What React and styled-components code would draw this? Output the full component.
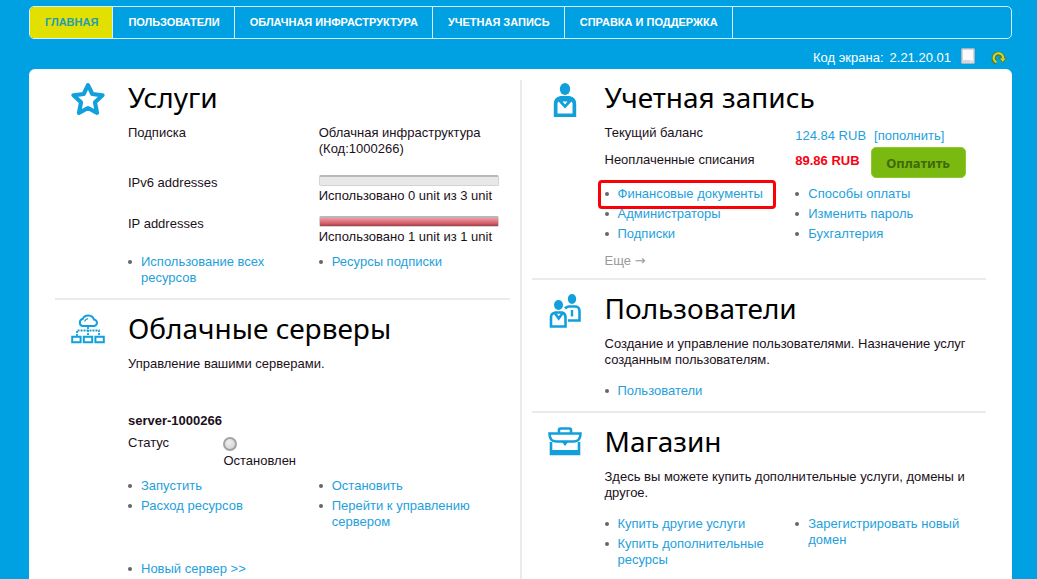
import styled, { createGlobalStyle } from "styled-components";

const StarIcon = () => (
  <svg width="34" height="34" viewBox="0 0 34 34" fill="none" stroke="#12a0dc" strokeWidth="4.2" strokeLinejoin="round">
    <path d="M17 2.2 L21.300 11 L31.500 12.300 L24 19.300 L26 29.800 L17 25 L8 29.800 L10 19.300 L2.500 12.300 L12.700 11 Z" />
  </svg>
);

const CloudIcon = () => (
  <svg width="34" height="34" viewBox="0 0 34 34" fill="none" stroke="#12a0dc" strokeWidth="2">
    <path d="M11.500 12 H22.500 A3.200 3.200 0 0 0 23 5.600 A6 5.600 0 0 0 11.700 5 A3.600 3.600 0 0 0 11.500 12 Z" />
    <path d="M13.500 7.500 Q14.500 5 17 4.700" strokeWidth="1.200" />
    <path d="M17 13 V22" strokeWidth="1.800" strokeDasharray="2 1" />
    <path d="M6 22 V16.500 H28 V22" strokeWidth="1.800" strokeDasharray="2 1" />
    <path d="M1.200 22.700 H9.600 V28.200 H1.200 Z M12.800 22.700 H21.200 V28.200 H12.800 Z M24.400 22.700 H32.800 V28.200 H24.400 Z" />
  </svg>
);

const PersonIcon = () => (
  <svg width="34" height="34" viewBox="0 0 34 34" fill="#12a0dc">
    <ellipse cx="17" cy="6" rx="5.200" ry="6" />
    <path d="M12.500 13 H21.500 Q28.200 14 28.200 21 V34 H5.800 V21 Q5.800 14 12.500 13 Z" />
    <path d="M10.500 18.500 L17 25.500 L23.500 18.500 L24.500 20 V30.500 H9.500 V20 Z" fill="#fff" />
    <path d="M14.500 18.500 H19.500 L17 21.500 Z" fill="#fff" />
  </svg>
);

const UsersIcon = () => (
  <svg width="34" height="34" viewBox="0 0 34 34" fill="none" stroke="#12a0dc" strokeWidth="2.600">
    <ellipse cx="24" cy="5" rx="4.200" ry="5" fill="#12a0dc" stroke="none" />
    <path d="M17 14.500 Q19 12.500 21 12.500 H28 Q31.500 13 31.500 17.500 V26.500 H20" />
    <path d="M24 16 V22.500" strokeWidth="2.400" />
    <ellipse cx="10.500" cy="11" rx="4.500" ry="5" fill="#12a0dc" stroke="none" />
    <path d="M7.500 18.500 H14 Q17.500 19.500 17.500 23 V32.500 H3 V23 Q3 19.500 7.500 18.500 Z" />
    <path d="M6.500 18.500 L10.700 24.500 L15 18.500" />
  </svg>
);

const BriefcaseIcon = () => (
  <svg width="34" height="34" viewBox="0 0 34 34" fill="none" stroke="#12a0dc" strokeWidth="2.600">
    <path d="M11 6 V2.800 Q11 1.500 12.500 1.500 H21.500 Q23 1.500 23 2.800 V6" />
    <path d="M1.500 6.500 H32.500 Q32.500 14.500 26 14.500 H8 Q1.500 14.500 1.500 6.500 Z" />
    <path d="M3 15 V27 H31 V15" />
    <path d="M2 25.500 H32" strokeWidth="5" />
    <path d="M14 15 L17 19 L20 15 Z" fill="#12a0dc" stroke="none" />
  </svg>
);

const NoteIcon = () => (
  <svg width="14" height="16" viewBox="0 0 14 16">
    <rect x="0.500" y="0.500" width="13" height="15" rx="1" fill="#d3d8e0" stroke="#a9b4bf" />
    <path d="M2 2 H12 V12 H2 Z" fill="#fbfbfd" />
    <path d="M9 14 L12.500 11" stroke="#fff" />
  </svg>
);

const RefreshIcon = () => (
  <svg width="16" height="14" viewBox="0 0 16 14" fill="none">
    <path d="M5.500 11.800 A4.700 4.700 0 1 1 12 7" stroke="#5d7a1b" strokeWidth="4" />
    <path d="M8 7 H15.500 L11.800 11.500 Z" fill="#c5d93e" stroke="#5d7a1b" />
    <path d="M5.500 11.300 A4.700 4.700 0 1 1 12 7.800" stroke="#c5d93e" strokeWidth="2.200" />
  </svg>
);

const menu = ["Главная", "Пользователи", "Облачная инфраструктура", "Учетная запись", "Справка и поддержка"];

const Links = ({ items }) => (
  <LinkColumn>
    {items.map((item) => (
      <LinkItem key={item.text || item} $marked={item.marked}>
        <Anchor href="#">{item.text || item}</Anchor>
      </LinkItem>
    ))}
  </LinkColumn>
);

const Resource = ({ name, used, total }) => (
  <Columns $top={used === 0 ? 18 : 12}>
    <label htmlFor={`bar-${used}`}>{name}</label>
    <div>
      <Bar id={`bar-${used}`} value={used} max={total} />
      <Caption>Использовано {used} unit из {total} unit</Caption>
    </div>
  </Columns>
);

const Block = ({ icon, title, children }) => (
  <Section>
    <IconCell>{icon}</IconCell>
    <Content>
      <Title>{title}</Title>
      {children}
    </Content>
  </Section>
);

const App = () => {
  return (
    <>
      <GlobalStyle />
      <Page>
        <Nav>
          {menu.map((name, i) => (
            <NavLink key={name} href="#" $active={i === 0}>{name}</NavLink>
          ))}
        </Nav>
        <Toolbar>
          <span>Код экрана:</span>
          <Code>2.21.20.01</Code>
          <IconButton aria-label="Заметка"><NoteIcon /></IconButton>
          <IconButton aria-label="Обновить"><RefreshIcon /></IconButton>
        </Toolbar>
        <Panel>
          <Column>
            <Block icon={<StarIcon />} title="Услуги">
              <Columns>
                <span>Подписка</span>
                <span>Облачная инфраструктура<br />(Код:1000266)</span>
              </Columns>
              <Resource name="IPv6 addresses" used={0} total={3} />
              <Resource name="IP addresses" used={1} total={1} />
              <Columns $top={9}>
                <Links items={["Использование всех ресурсов"]} />
                <Links items={["Ресурсы подписки"]} />
              </Columns>
            </Block>
            <Block icon={<CloudIcon />} title="Облачные серверы">
              <p>Управление вашими серверами.</p>
              <ServerName>server-1000266</ServerName>
              <Status>
                <span>Статус</span>
                <div>
                  <Lamp />
                  <p>Остановлен</p>
                </div>
              </Status>
              <Columns $top={9}>
                <Links items={["Запустить", "Расход ресурсов"]} />
                <Links items={["Остановить", "Перейти к управлению сервером"]} />
              </Columns>
              <Columns $top={31}>
                <Links items={["Новый сервер >>"]} />
              </Columns>
            </Block>
          </Column>
          <Divider />
          <Column>
            <Block icon={<PersonIcon />} title="Учетная запись">
              <Billing>
                <span>Текущий баланс</span>
                <Balance>
                  <Anchor href="#">124.84 RUB</Anchor>
                  <Anchor href="#">[пополнить]</Anchor>
                </Balance>
                <Unpaid>Неоплаченные списания</Unpaid>
                <Debt>
                  <strong>89.86 RUB</strong>
                  <PayButton>Оплатить</PayButton>
                </Debt>
              </Billing>
              <Columns $top={8}>
                <Links items={[{ text: "Финансовые документы", marked: true }, "Администраторы", "Подписки"]} />
                <Links items={["Способы оплаты", "Изменить пароль", "Бухгалтерия"]} />
              </Columns>
              <More href="#">Еще <Arrow>→</Arrow></More>
            </Block>
            <Block icon={<UsersIcon />} title="Пользователи">
              <p>Создание и управление пользователями. Назначение услуг созданным пользователям.</p>
              <Columns $top={15}>
                <Links items={["Пользователи"]} />
              </Columns>
            </Block>
            <Block icon={<BriefcaseIcon />} title="Магазин">
              <p>Здесь вы можете купить дополнительные услуги, домены и другое.</p>
              <Columns $top={15}>
                <Links items={["Купить другие услуги", "Купить дополнительные ресурсы"]} />
                <Links items={["Зарегистрировать новый домен"]} />
              </Columns>
            </Block>
          </Column>
        </Panel>
      </Page>
    </>
  );
};

export default App;

const GlobalStyle = createGlobalStyle`
  * {
    box-sizing: border-box;
  }

  body {
    margin: 0;
    background: #00a1e2;
    color: #1b1020;
    font-family: "Liberation Sans", Arial, sans-serif;
    font-size: 13px;
    line-height: 16px;
  }

  p, ul, h2 {
    margin: 0;
    padding: 0;
  }
`;

const Page = styled.div`
  display: flex;
  flex-direction: column;
  min-height: 100vh;
  padding: 6px 25px 0 29px;
`;

const Nav = styled.nav`
  display: flex;
  height: 33px;
  border: 1px solid #d8f1fc;
  border-radius: 5px;
  overflow: hidden;
`;

const NavLink = styled.a`
  display: flex;
  align-items: center;
  padding: 0 14px 2px 15px;
  border-right: 1px solid #d8f1fc;
  background: ${({ $active }) => ($active ? "#e2e000" : "transparent")};
  color: ${({ $active }) => ($active ? "#1f9fb0" : "#ffffff")};
  font-size: 11px;
  font-weight: bold;
  text-transform: uppercase;
  text-decoration: none;
`;

const Toolbar = styled.div`
  display: flex;
  align-items: center;
  justify-content: flex-end;
  height: 30px;
  padding: 8px 5px 0 0;
  color: #ffffff;
`;

const Code = styled.span`
  margin-left: 6px;
`;

const IconButton = styled.button`
  display: flex;
  margin: 0 6px 4px 10px;
  padding: 0;
  border: 0;
  background: none;

  & + & {
    margin: 0 0 0 10px;
  }
`;

const Panel = styled.main`
  display: grid;
  grid-template-columns: 1fr 2px 1fr;
  flex: 1;
  column-gap: 10px;
  padding: 0 26px;
  border-radius: 6px 6px 0 0;
  background: #ffffff;
`;

const Column = styled.div`
  min-width: 0;
`;

const Divider = styled.div`
  margin-top: 11px;
  background: #ebebeb;
`;

const Section = styled.section`
  display: flex;
  padding: 10px 0 9px;

  & + & {
    border-top: 2px solid #ebebeb;
  }
`;

const IconCell = styled.div`
  flex: none;
  width: 73px;
  padding: 4px 0 0 16px;
`;

const Content = styled.div`
  flex: 1;
  min-width: 0;
`;

const Title = styled.h2`
  margin-bottom: 10px;
  color: #000000;
  font-family: "Noto Sans", sans-serif;
  font-size: 28px;
  font-weight: normal;
  line-height: 36px;
`;

const Columns = styled.div`
  display: grid;
  grid-template-columns: 1fr 1fr;
  margin-top: ${({ $top }) => $top || 0}px;

  &:last-child {
    margin-bottom: 3px;
  }
`;

const Bar = styled.progress`
  display: block;
  width: 180px;
  height: 11px;
  appearance: none;
  border: 0;

  &::-webkit-progress-bar {
    border: 1px solid #d2d2d2;
    border-top: 2px solid #b8b8b8;
    border-radius: 2px;
    background: #e8e8e8;
  }

  &::-webkit-progress-value {
    background: linear-gradient(#ef9a9f, #d4616e 65%, #a23d4b);
  }
`;

const Caption = styled.p`
  margin-top: 2px;
`;

const LinkColumn = styled.ul`
  display: flex;
  flex-direction: column;
  gap: 4px;
  list-style: none;
`;

const LinkItem = styled.li`
  position: relative;
  padding: 0 20px 0 13px;

  &::before {
    content: "";
    position: absolute;
    top: 6px;
    left: 0;
    width: 4px;
    height: 4px;
    border-radius: 50%;
    background: #666666;
  }

  &::after {
    content: "";
    display: ${({ $marked }) => ($marked ? "block" : "none")};
    position: absolute;
    inset: -6px 19px -7px -7px;
    border: 3px solid #fb0007;
    border-radius: 4px;
    pointer-events: none;
  }
`;

const Anchor = styled.a`
  color: #259fdb;
  text-decoration: none;
`;

const ServerName = styled.p`
  margin: 41px 0 6px;
  font-weight: bold;
`;

const Status = styled.div`
  display: grid;
  grid-template-columns: 1fr 3fr;
`;

const Lamp = styled.div`
  width: 14px;
  height: 14px;
  margin: 2px 0;
  border: 2px solid #a3a3a3;
  border-radius: 50%;
  background: radial-gradient(circle at 40% 35%, #eeeeee, #cfcfcf);
`;

const Billing = styled.div`
  display: grid;
  grid-template-columns: 1fr 1fr;
`;

const Balance = styled.div`
  display: flex;
  gap: 8px;
  padding-top: 3px;
`;

const Unpaid = styled.span`
  padding-top: 8px;
`;

const Debt = styled.div`
  display: flex;
  align-items: center;
  gap: 11px;
  margin-top: 3px;

  & strong {
    padding-bottom: 3px;
    color: #f90012;
  }
`;

const PayButton = styled.button`
  width: 95px;
  height: 31px;
  padding: 0;
  border: 1px solid #8ec92e;
  border-radius: 5px;
  background: #7ab90f;
  color: #40680b;
  font-family: "Noto Sans", sans-serif;
  font-size: 13px;
  font-weight: bold;
`;

const More = styled.a`
  display: block;
  margin-top: 11px;
  color: #999999;
  text-decoration: none;
`;

const Arrow = styled.span`
  font-family: "DejaVu Sans", sans-serif;
`;
